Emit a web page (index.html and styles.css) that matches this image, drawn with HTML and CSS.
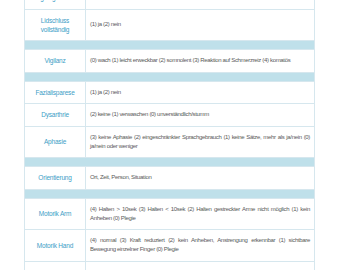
FILE: index.html
```html
<!DOCTYPE html>
<html lang="de">
<head>
<meta charset="utf-8">
<link rel="stylesheet" href="styles.css">
</head>
<body>
<table class="score">
  <tr><td class="label">Augen geöffnet?</td><td class="desc">(1) ja (2) nein</td></tr>
  <tr><td class="label">Lidschluss vollständig</td><td class="desc">(1) ja (2) nein</td></tr>
  <tr class="sep"><td colspan="2"></td></tr>
  <tr><td class="label">Vigilanz</td><td class="desc">(0) wach (1) leicht erweckbar (2) somnolent (3) Reaktion auf Schmerzreiz (4) komatös</td></tr>
  <tr class="sep"><td colspan="2"></td></tr>
  <tr><td class="label">Fazialisparese</td><td class="desc">(1) ja (2) nein</td></tr>
  <tr><td class="label">Dysarthrie</td><td class="desc">(2) keine (1) verwaschen (0) unverständlich/stumm</td></tr>
  <tr><td class="label">Aphasie</td><td class="desc">(3) keine Aphasie (2) eingeschränkter Sprachgebrauch (1) keine Sätze, mehr als ja/nein (0) ja/nein oder weniger</td></tr>
  <tr class="sep"><td colspan="2"></td></tr>
  <tr><td class="label">Orientierung</td><td class="desc">Ort, Zeit, Person, Situation</td></tr>
  <tr class="sep"><td colspan="2"></td></tr>
  <tr><td class="label">Motorik Arm</td><td class="desc">(4) Halten &gt; 10sek (3) Halten &lt; 10sek (2) Halten gestreckter Arme nicht möglich (1) kein Anheben (0) Plegie</td></tr>
  <tr><td class="label">Motorik Hand</td><td class="desc">(4) normal (3) Kraft reduziert (2) kein Anheben, Anstrengung erkennbar (1) sichtbare Bewegung einzelner Finger (0) Plegie</td></tr>
  <tr><td class="label">Motorik Bein</td><td class="desc">(4) Halten &gt; 5sek (3) Halten &lt; 5sek (2) kein Anheben möglich, Anstrengung erkennbar (1) sichtbare Bewegung (0) Plegie</td></tr>
</table>
</body>
</html>
```
FILE: styles.css
```css
html, body {
  margin: 0;
  padding: 0;
  background: #ffffff;
}
body {
  font-family: "Liberation Sans", Arial, sans-serif;
  font-size: 6px;
  line-height: 9px;
  overflow: hidden;
}
.score {
  margin: -14px 0 0 24px;
  width: 291px;
  border-collapse: collapse;
  table-layout: fixed;
}
.score td {
  border: 1px solid #d6e7ee;
  padding: 6px 4px 6.5px;
  vertical-align: middle;
}
.score .label {
  width: 48px;
  padding: 6px 6px 6.5px;
  text-align: center;
  color: #3d9ec6;
  font-size: 6.5px;
  letter-spacing: -0.2px;
}
.score .desc {
  color: #5a5a5a;
  text-align: justify;
  letter-spacing: -0.33px;
}
.score .sep td {
  height: 8px;
  padding: 0;
  background: #bfe0ea;
  border-color: #d6e7ee;
}
```
